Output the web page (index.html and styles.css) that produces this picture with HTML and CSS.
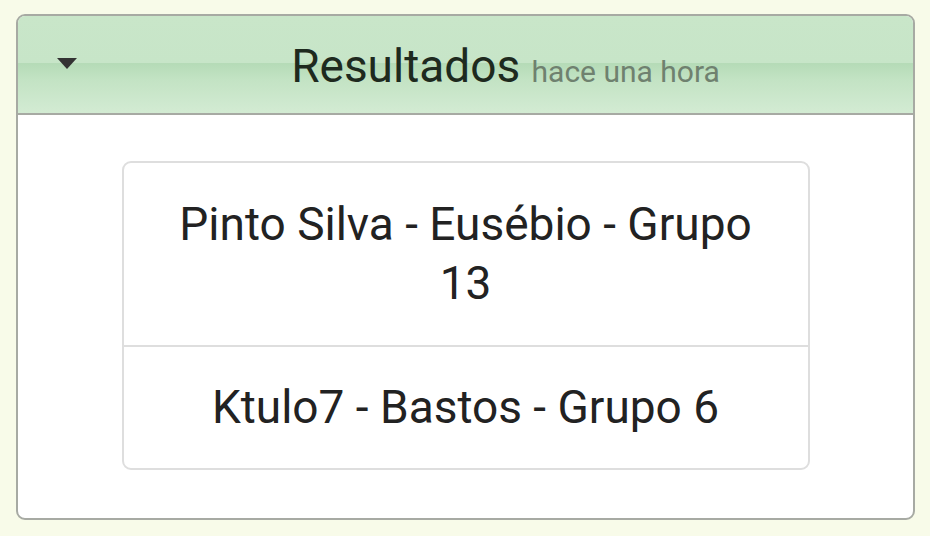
FILE: index.html
```html
<!DOCTYPE html>
<html lang="es">
<head>
<meta charset="utf-8">
<title>Resultados</title>
<link rel="stylesheet" href="styles.css">
</head>
<body>
<div class="card">
  <div class="card-header">
    <svg class="caret" width="20" height="11" viewBox="0 0 20 11"><path d="M0 0 H20 L10 11 Z" fill="#333"/></svg>
    <h2 class="title">Resultados <small class="time">hace una hora</small></h2>
  </div>
  <div class="card-body">
    <ul class="list">
      <li class="item item-first">Pinto Silva - Eusébio - Grupo 13</li>
      <li class="item">Ktulo7 - Bastos - Grupo 6</li>
    </ul>
  </div>
</div>
</body>
</html>
```
FILE: styles.css
```css
html, body {
  margin: 0;
  padding: 0;
  background: #f8fbe9;
  font-family: Roboto, "Noto Sans", sans-serif;
}
body {
  padding: 14px 15px 16px 16px;
}
.card {
  border: 2px solid #a7aaa3;
  border-radius: 9px;
  background: #fff;
  overflow: hidden;
}
.card-header {
  position: relative;
  height: 97px;
  padding-left: 80px;
  border-bottom: 2px solid #a7aaa3;
  background: linear-gradient(to bottom, #c9e6c9 0%, #c7e5c8 48%, #b5dbb7 49%, #c3e3c4 66%, #d3ebd3 100%);
  display: flex;
  align-items: center;
  justify-content: center;
}
.caret {
  position: absolute;
  left: 39px;
  top: 42px;
}
.title {
  margin: 0;
  font-weight: 400;
  font-size: 46px;
  color: #1e2a1e;
  line-height: 1;
  padding-top: 2px;
}
.time {
  font-size: 30px;
  color: #6f816f;
}
.card-body {
  padding: 46px 0 48px;
  display: flex;
  justify-content: center;
}
.list {
  list-style: none;
  margin: 0;
  padding: 0;
  width: 684px;
  border: 2px solid #dedede;
  border-radius: 9px;
}
.item {
  font-size: 46px;
  color: #222;
  text-align: center;
  line-height: 59px;
  padding: 31px 40px 31px;
}
.item-first {
  padding: 32px 40px 32px;
}
.item + .item {
  border-top: 2px solid #dedede;
}
```
